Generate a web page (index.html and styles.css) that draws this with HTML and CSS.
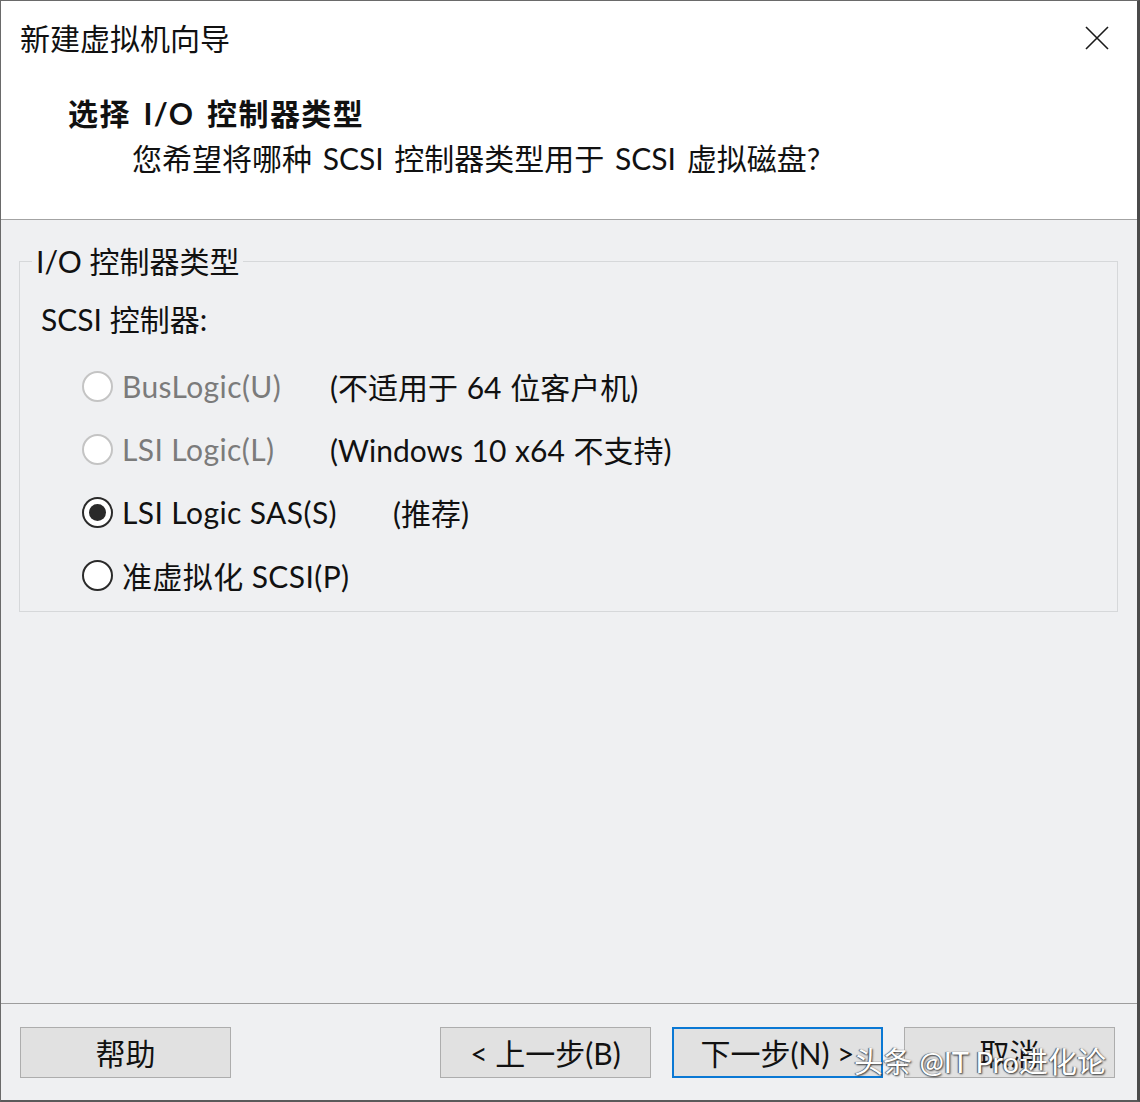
FILE: index.html
```html
<!DOCTYPE html>
<html lang="zh-CN">
<head>
  <meta charset="UTF-8">
  <title>新建虚拟机向导</title>
  <link rel="stylesheet" href="styles.css">
</head>
<body>
  <div class="window">
    <!-- White top: caption + page header -->
    <div class="top">
      <div class="titlebar">
        <span class="caption">新建虚拟机向导</span>
        <svg class="close" width="26" height="26" viewBox="0 0 26 26">
          <path d="M2 2 L24 24 M24 2 L2 24" stroke="#1a1a1a" stroke-width="1.6" fill="none"/>
        </svg>
      </div>
      <h1 class="page-title">选择 I/O 控制器类型</h1>
      <p class="page-sub">您希望将哪种 SCSI 控制器类型用于 SCSI 虚拟磁盘?</p>
    </div>

    <!-- Wizard page content -->
    <div class="content">
      <fieldset class="group">
        <legend>I/O 控制器类型</legend>
        <div class="group-label">SCSI 控制器:</div>
        <div class="options">
          <div class="option disabled">
            <span class="opt"><span class="radio"></span>BusLogic(U)</span>
            <span class="note">(不适用于 64 位客户机)</span>
          </div>
          <div class="option disabled">
            <span class="opt"><span class="radio"></span>LSI Logic(L)</span>
            <span class="note">(Windows 10 x64 不支持)</span>
          </div>
          <div class="option">
            <span class="opt"><span class="radio checked"></span>LSI Logic SAS(S)</span>
            <span class="note note-far">(推荐)</span>
          </div>
          <div class="option">
            <span class="opt"><span class="radio"></span>准虚拟化 SCSI(P)</span>
          </div>
        </div>
      </fieldset>
    </div>

    <!-- Button row -->
    <div class="footer">
      <button class="btn">帮助</button>
      <div class="spacer"></div>
      <button class="btn">&lt; 上一步(B)</button>
      <button class="btn btn-default">下一步(N) &gt;</button>
      <button class="btn">取消</button>
      <div class="watermark">头条 @IT Pro进化论</div>
    </div>
  </div>
</body>
</html>
```

FILE: styles.css
```css
* {
  margin: 0;
  padding: 0;
  box-sizing: border-box;
}

body {
  width: 1140px;
  height: 1102px;
  background: #3a3a3a;
  font-family: Lato, "Noto Sans CJK SC", sans-serif;
  font-size: 30px;
  color: #111;
}

.window {
  position: relative;
  width: 1140px;
  height: 1102px;
  display: flex;
  flex-direction: column;
  background: #eff0f2;
  border: 1px solid #6a6a6a;
  border-right: 3px solid #4a4a4a;
  border-bottom: 2px solid #5a5a5a;
}

/* Top white area */
.top {
  background: #fff;
  height: 219px;
  border-bottom: 1px solid #a3a3a3;
}

.titlebar {
  height: 73px;
  display: flex;
  align-items: center;
  justify-content: space-between;
  padding: 0 27px 0 19px;
}

.caption {
  line-height: 40px;
}

.close {
  display: block;
}

.page-title {
  font-size: 30px;
  font-weight: 700;
  line-height: 40px;
  margin-top: 19px;
  padding-left: 67px;
  word-spacing: 4px;
  letter-spacing: 1.4px;
}

.page-sub {
  line-height: 40px;
  margin-top: 5px;
  padding-left: 131px;
  word-spacing: 3px;
}

/* Content */
.content {
  flex: 1;
  padding: 25px 19px 0 18px;
  border-bottom: 1px solid #9d9d9d;
}

.group {
  border: 1px solid #d6d8da;
  padding: 0 0 16px 0;
}

.group legend {
  margin-left: 12px;
  padding: 0 4px;
  line-height: 32px;
}

.group-label {
  line-height: 40px;
  margin-top: 22px;
  padding-left: 21px;
}

.options {
  display: flex;
  flex-direction: column;
  gap: 23px;
  margin-top: 27px;
  padding-left: 62px;
}

.option {
  display: flex;
  align-items: center;
  height: 40px;
}

.opt {
  display: flex;
  align-items: center;
  width: 248px;
  white-space: nowrap;
  letter-spacing: 0.4px;
}

.option.disabled .opt {
  color: #7b7b7b;
}

.radio {
  width: 31px;
  height: 31px;
  border-radius: 50%;
  border: 2px solid #2a2a2a;
  background: #fff;
  margin-right: 9px;
  flex-shrink: 0;
  display: flex;
  align-items: center;
  justify-content: center;
}

.option.disabled .radio {
  border-color: #c4c4c4;
}

.radio.checked::after {
  content: "";
  width: 17px;
  height: 17px;
  border-radius: 50%;
  background: #2a2a2a;
}

.note {
  white-space: nowrap;
  word-spacing: 1px;
}

.note-far {
  margin-left: 63px;
}

/* Footer buttons */
.footer {
  position: relative;
  height: 96px;
  display: flex;
  align-items: flex-start;
  padding: 23px 22px 0 19px;
  gap: 21px;
}

.spacer {
  flex: 1;
}

.btn {
  width: 211px;
  height: 51px;
  font-family: inherit;
  font-size: 30px;
  color: #111;
  background: #e1e1e1;
  border: 1px solid #adadad;
  line-height: 1;
}

.btn-default {
  border: 2px solid #0a78d4;
}

.watermark {
  position: absolute;
  left: 853px;
  top: 35px;
  font-size: 29px;
  color: #fff;
  white-space: nowrap;
  text-shadow: 1px 1px 2px #333, -1px 0 1px #555;
}
```
